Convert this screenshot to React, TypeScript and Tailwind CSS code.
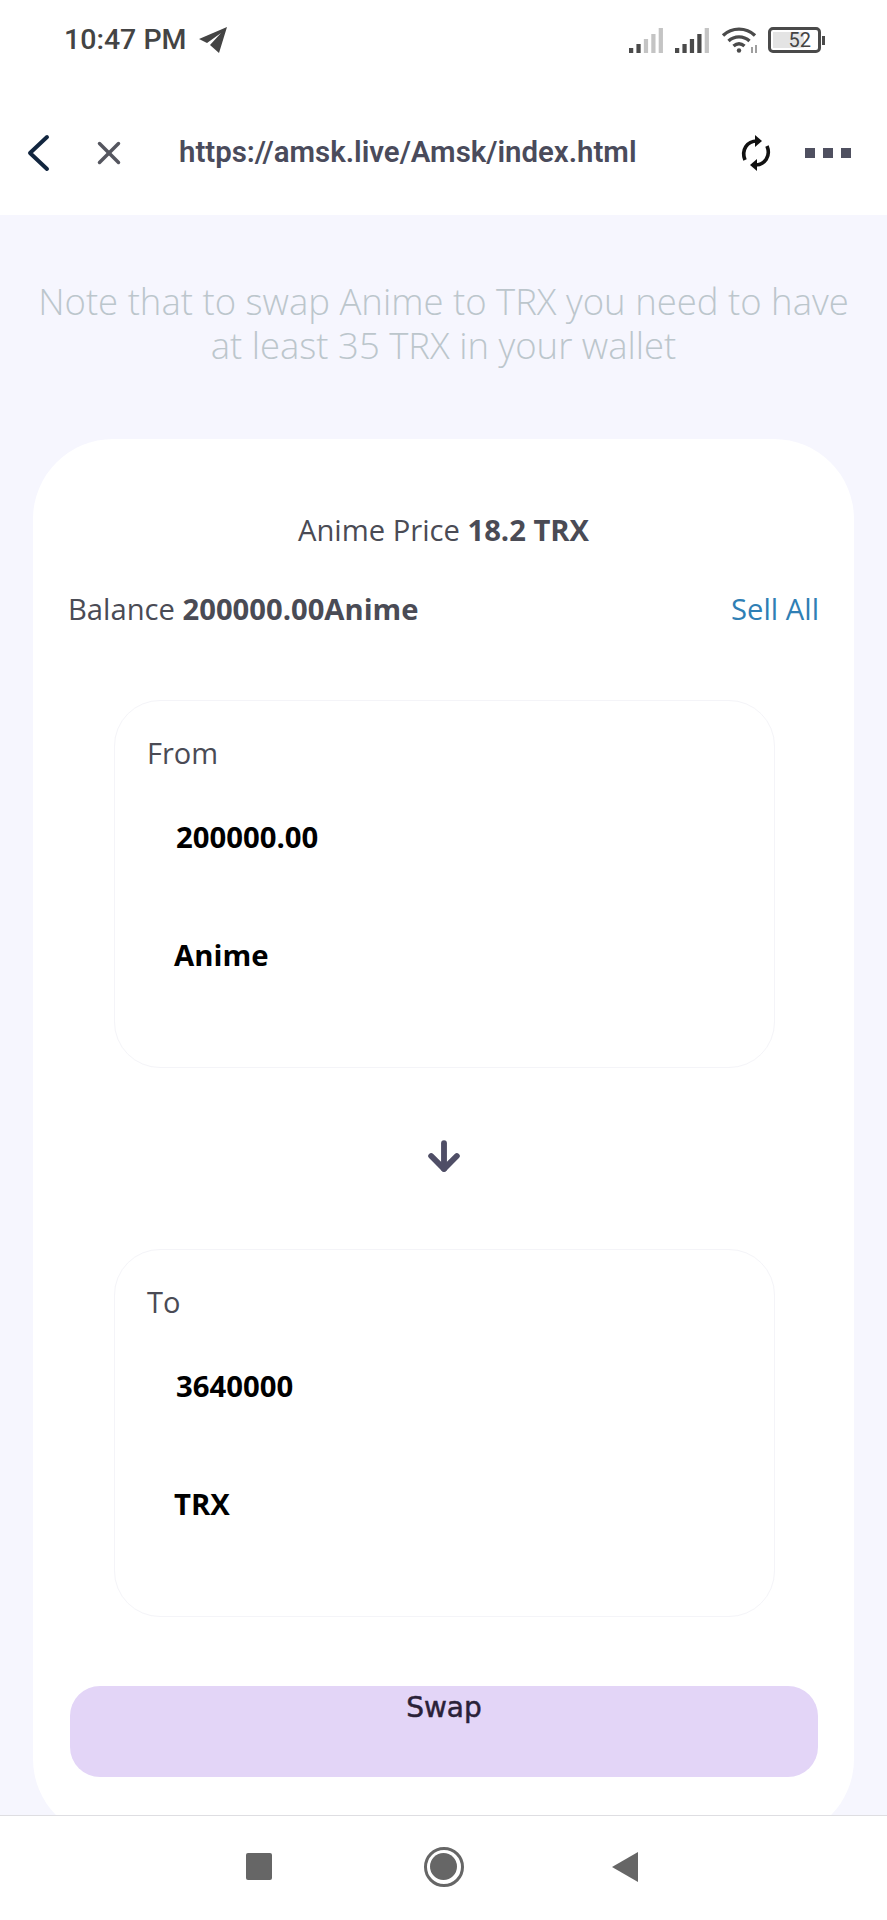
import { ArrowDown, X } from 'lucide-react';

function SignalIcon({ lit }: { lit: number }) {
  const bars = [
    { x: 0, h: 5 },
    { x: 7, h: 9 },
    { x: 14, h: 14 },
    { x: 21, h: 19 },
    { x: 28, h: 25 },
  ];
  return (
    <svg width="35" height="26" viewBox="0 0 33 26" preserveAspectRatio="none">
      {bars.map((b, i) => (
        <rect
          key={b.x}
          x={b.x}
          y={26 - b.h}
          width="4"
          height={b.h}
          fill={i < lit ? '#4a4a4a' : '#c4c4c4'}
        />
      ))}
    </svg>
  );
}

function WifiIcon() {
  return (
    <svg width="38" height="28" viewBox="0 0 38 28" fill="none" stroke="#4a4a4a" strokeWidth="3.4">
      <path d="M2 9.5C11 1 25 1 34 9.5" />
      <path d="M7.5 15C13.5 9.5 22.5 9.5 28.5 15" />
      <path d="M12.5 20C16 17 20 17 23.5 20" />
      <circle cx="18" cy="24.5" r="2.2" fill="#4a4a4a" stroke="none" />
      <path d="M31 21v6M35 19v8" stroke="#777" strokeWidth="1.4" />
    </svg>
  );
}

function Battery() {
  return (
    <div className="flex items-center gap-[1px]">
      <div className="flex h-[26px] w-[53px] items-center rounded-[5px] border-[3px] border-[#4a4a4a] p-[2px]">
        <div className="flex h-full w-[31px] items-center justify-end bg-[#e4e4e4]">
          <span className="translate-x-[7px] text-[20px] leading-none text-[#444] [font-family:Roboto,sans-serif]">52</span>
        </div>
      </div>
      <div className="h-[9px] w-[3px] bg-[#4a4a4a]" />
    </div>
  );
}

function SwapBox({ label, amount, unit }: { label: string; amount: string; unit: string }) {
  return (
    <div className="ml-[81px] mr-[79px] h-[368px] rounded-[46px] border border-[#f4f4f8] bg-white pl-[32px] pt-[32px]">
      <p className="text-[29px] leading-[40px] text-[#4a4b55]">{label}</p>
      <p className="mt-[44px] pl-[29px] text-[29.3px] font-bold leading-[40px] text-black">{amount}</p>
      <p className="mt-[78px] pl-[27px] text-[29.3px] font-bold leading-[40px] text-black">{unit}</p>
    </div>
  );
}

export default function App() {
  return (
    <div className="flex h-[1920px] w-[887px] flex-col overflow-hidden bg-[#f6f6fe] [font-family:'Open_Sans',sans-serif]">
      {/* Status bar + browser bar */}
      <div className="h-[215px] shrink-0 bg-white">
        <div className="flex h-[80px] items-center justify-between pl-[64px] pr-[62px]">
          <div className="flex items-center gap-[11px]">
            <span className="text-[28.5px] font-medium leading-none text-[#444] [font-family:Roboto,sans-serif]">10:47 PM</span>
            <svg width="30" height="28" viewBox="0 0 30 28" fill="#444">
              <path d="M29 1 1 13l8 4L23 7 12 19v0l9 8z" />
            </svg>
          </div>
          <div className="flex items-center gap-[9px]">
            <div className="mr-[2px] flex">
              <SignalIcon lit={2} />
            </div>
            <div className="mr-[2px] flex">
              <SignalIcon lit={4} />
            </div>
            <WifiIcon />
            <Battery />
          </div>
        </div>
        <div className="mt-[33px] flex h-[80px] items-center pl-[26px] pr-[36px]">
          <svg width="24" height="38" viewBox="0 0 24 38" fill="none" stroke="#12263f" strokeWidth="4" strokeLinecap="round" strokeLinejoin="round">
            <path d="M21 3 4 19l17 16" />
          </svg>
          <X size={38} strokeWidth={2.2} className="ml-[40px] text-[#55565f]" />
          <span className="ml-[51px] text-[29.4px] font-semibold leading-none text-[#4a4b5b] [font-family:Roboto,sans-serif]">
            https://amsk.live/Amsk/index.html
          </span>
          <svg className="ml-auto" width="32" height="38" viewBox="0 0 32 38" fill="none" stroke="#111" strokeWidth="3.6">
            <path d="M5 26C1 16 7 7 17 7" />
            <path d="M15 1l7 6-7 6z" fill="#111" stroke="none" />
            <path d="M27 12c4 10-2 19-12 19" />
            <path d="M17 25l-7 6 7 6z" fill="#111" stroke="none" />
          </svg>
          <div className="ml-[33px] flex gap-[8px]">
            <div className="h-[10px] w-[10px] bg-[#4f5060]" />
            <div className="h-[10px] w-[10px] bg-[#4f5060]" />
            <div className="h-[10px] w-[10px] bg-[#4f5060]" />
          </div>
        </div>
      </div>

      {/* Page */}
      <div className="min-h-0 flex-1 overflow-hidden">
        <p className="px-[30px] pt-[64px] text-center text-[36.5px] font-light leading-[44px] text-[#bcc6cc]">
          Note that to swap Anime to TRX you need to have at least 35 TRX in your wallet
        </p>
        <div className="mx-[33px] mt-[72px] h-[1400px] rounded-[80px] bg-white">
          <p className="pt-[70px] text-center text-[29.2px] leading-[42px] text-[#4a4b55]">
            Anime Price <b className="font-bold">18.2 TRX</b>
          </p>
          <div className="mt-[37px] flex items-center justify-between px-[35px] text-[29.2px] leading-[42px]">
            <p className="text-[#4a4b55]">
              Balance <b className="font-bold">200000.00Anime</b>
            </p>
            <p className="text-[#2f7fb5]">Sell All</p>
          </div>
          <div className="mt-[70px]">
            <SwapBox label="From" amount="200000.00" unit="Anime" />
          </div>
          <div className="flex h-[181px] items-center justify-center pb-[5px]">
            <ArrowDown size={44} strokeWidth={3.2} className="text-[#4f4e66]" />
          </div>
          <SwapBox label="To" amount="3640000" unit="TRX" />
          <div className="ml-[37px] mr-[36px] mt-[69px] h-[91px] rounded-[30px] bg-[#e3d5f7] text-center text-[28px] font-medium leading-[44px] text-[#2a2138] [-webkit-text-stroke:0.5px_#2a2138] [font-family:'DejaVu_Sans',sans-serif]">
            Swap
          </div>
        </div>
      </div>

      {/* Android nav */}
      <div className="flex h-[105px] shrink-0 items-center justify-center gap-[148px] border-t border-[#dedee2] bg-white pb-[3px] pr-[4px]">
        <div className="mr-[4px] h-[27px] w-[26px] rounded-[2px] bg-[#666]" />
        <div className="flex h-[40px] w-[40px] items-center justify-center rounded-full border-[3px] border-[#666]">
          <div className="h-[27px] w-[27px] rounded-full bg-[#666]" />
        </div>
        <svg width="26" height="30" viewBox="0 0 26 30" fill="#666">
          <path d="M26 0v30L0 15z" />
        </svg>
      </div>
    </div>
  );
}
